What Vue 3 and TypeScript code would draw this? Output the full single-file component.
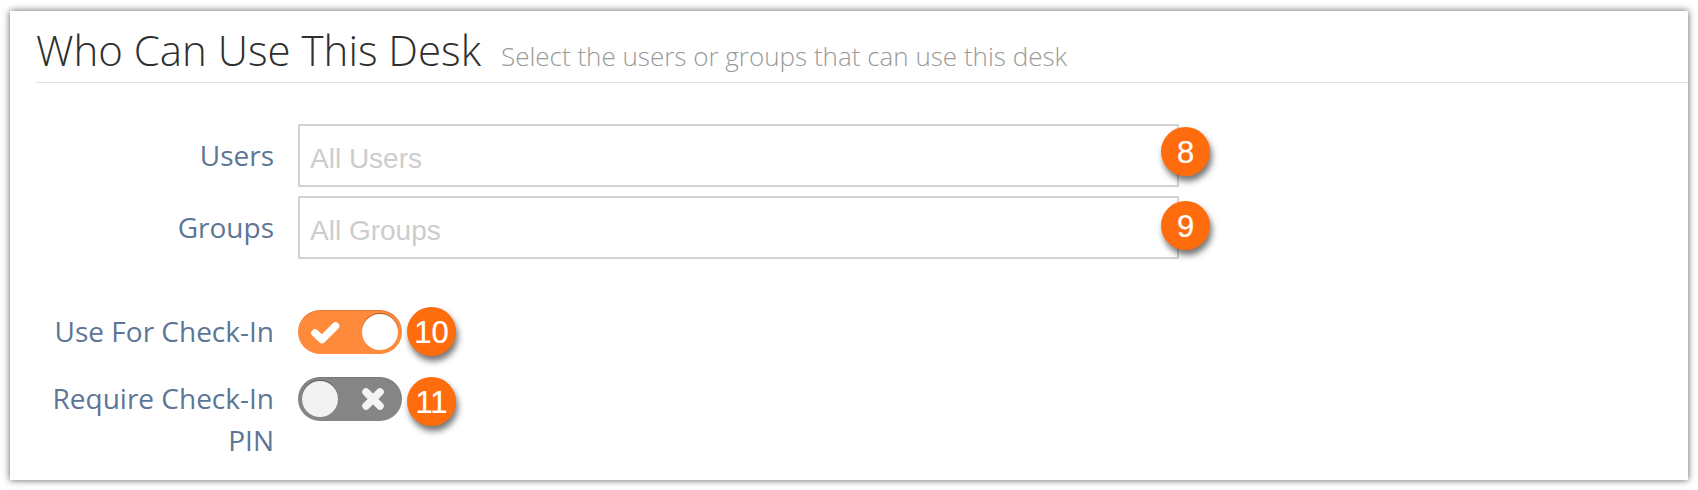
<script setup lang="ts">
interface Row {
  label: string;
  placeholder?: string;
  on?: boolean;
  badge: number;
}

const inputs: Row[] = [
  { label: "Users", placeholder: "All Users", badge: 8 },
  { label: "Groups", placeholder: "All Groups", badge: 9 },
];

const toggles: Row[] = [
  { label: "Use For Check-In", on: true, badge: 10 },
  { label: "Require Check-In PIN", on: false, badge: 11 },
];
</script>

<template>
  <div class="page">
    <section class="card">
      <header class="heading">
        <h2>Who Can Use This Desk</h2>
        <small>Select the users or groups that can use this desk</small>
      </header>

      <div class="inputs">
        <div v-for="row in inputs" :key="row.label" class="row">
          <label class="label">{{ row.label }}</label>
          <div class="field">
            <input type="text" :placeholder="row.placeholder" />
            <span class="badge">{{ row.badge }}</span>
          </div>
        </div>
      </div>

      <div class="toggles">
        <div v-for="row in toggles" :key="row.label" class="row">
          <label class="label">{{ row.label }}</label>
          <div class="toggle" :class="{ on: row.on }">
            <svg v-if="row.on" class="mark" viewBox="0 0 36 28" width="36" height="28">
              <path d="M7 15 L14 21.5 L27.5 8" />
            </svg>
            <span class="knob"></span>
            <svg v-if="!row.on" class="mark" viewBox="0 0 24 24" width="24" height="24">
              <path d="M5 5 L19 19 M19 5 L5 19" />
            </svg>
            <span class="badge">{{ row.badge }}</span>
          </div>
        </div>
      </div>
    </section>
  </div>
</template>

<style>
html,
body {
  margin: 0;
  background: #fff;
}
</style>

<style scoped>
.page {
  box-sizing: border-box;
  width: 1698px;
  height: 490px;
  padding: 11px 10px 10px;
}

.card {
  box-sizing: border-box;
  height: 469px;
  padding: 0 0 0 26px;
  background: #fff;
  box-shadow: 0 0 7px rgba(0, 0, 0, 0.65);
  font-family: "Open Sans", sans-serif;
}

.heading {
  display: flex;
  align-items: baseline;
  gap: 20px;
  height: 72px;
  box-sizing: border-box;
  padding-top: 12px;
  border-bottom: 1px solid #e0e0e0;
}

.heading h2 {
  margin: 0;
  font-size: 42px;
  line-height: 54px;
  font-weight: 300;
  color: #2f2f2f;
}

.heading small {
  font-size: 26px;
  font-weight: 300;
  color: #9a9a9a;
}

.inputs {
  display: flex;
  flex-direction: column;
  gap: 9px;
  margin-top: 41px;
}

.toggles {
  display: flex;
  flex-direction: column;
  gap: 23px;
  margin-top: 51px;
}

.row {
  display: grid;
  grid-template-columns: 238px 1fr;
  column-gap: 24px;
  align-items: start;
}

.label {
  text-align: right;
  font-size: 28px;
  line-height: 42px;
  color: #5d7696;
}

.inputs .label {
  line-height: 63px;
}

.field {
  position: relative;
  width: 881px;
  height: 63px;
}

.field input {
  box-sizing: border-box;
  width: 100%;
  height: 100%;
  padding: 6px 10px 0;
  border: 2px solid #d2d2d2;
  outline: none;
  background: #fff;
  font-family: "Liberation Sans", Arial, sans-serif;
  font-size: 28px;
}

.field input::placeholder {
  color: #cdcdcd;
  opacity: 1;
}

.toggle {
  position: relative;
  display: flex;
  align-items: center;
  justify-content: space-between;
  box-sizing: border-box;
  width: 104px;
  height: 44px;
  padding: 0 4px;
  border-radius: 22px;
  background: #858585;
  box-shadow: inset 0 1px 1px rgba(0, 0, 0, 0.1);
}

.toggle.on {
  background: #ff8a3c;
  padding: 0 4px 0 0;
}

.knob {
  width: 36px;
  height: 36px;
  border-radius: 50%;
  background: #f2f2f2;
  box-shadow: 0 -1px 0 rgba(0, 0, 0, 0.3);
}

.toggle.on .knob {
  background: #fff;
}

.mark {
  fill: none;
  stroke: #f4f4f4;
  stroke-width: 7.5;
  stroke-linecap: round;
  stroke-linejoin: round;
}

.toggle.on .mark {
  margin-left: 10px;
  stroke: #fff;
}

.toggle:not(.on) .mark {
  margin-right: 13px;
}

.badge {
  position: absolute;
  display: flex;
  align-items: center;
  justify-content: center;
  box-sizing: border-box;
  width: 49px;
  height: 49px;
  padding-top: 2px;
  border-radius: 50%;
  background: #ff6c0e;
  box-shadow: 2px 5px 6px rgba(0, 0, 0, 0.55);
  color: #fff;
  font-family: "Liberation Sans", Arial, sans-serif;
  font-size: 31px;
  -webkit-text-stroke: 0.2px #fff;
}

.field .badge {
  right: -31px;
  top: 3px;
}

.row + .row .field .badge {
  top: 5px;
}

.toggle .badge {
  left: 109px;
  top: -3px;
}

.row + .row .toggle .badge {
  top: 0;
}
</style>
